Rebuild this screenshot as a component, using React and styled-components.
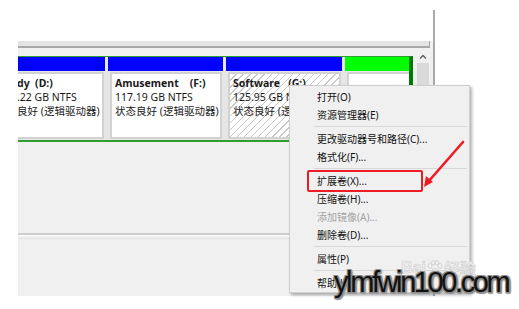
import React from "react";
import styled, { createGlobalStyle } from "styled-components";

const GlobalStyle = createGlobalStyle`
  html, body {
    margin: 0;
    padding: 0;
    background: #ffffff;
    overflow: hidden;
  }
  body {
    font-family: "Noto Sans", "Noto Sans CJK SC", sans-serif;
  }
`;

const partitions = [
  { key: "d", bar: "#0000ff", width: 87, lines: ["dy  (D:)", ".22 GB NTFS", "良好 (逻辑驱动器)"], clip: true },
  { key: "f", bar: "#0000ff", width: 115, lines: ["Amusement    (F:)", "117.19 GB NTFS", "状态良好 (逻辑驱动器)"] },
  { key: "g", bar: "#0000ff", width: 116, lines: ["Software   (G:)", "125.95 GB NTFS", "状态良好 (逻辑驱动器)"], hatched: true },
  { key: "free", bar: "#00ff00", width: 68, lines: [] },
];

const menu = [
  { label: "打开(O)" },
  { label: "资源管理器(E)" },
  { sep: true },
  { label: "更改驱动器号和路径(C)..." },
  { label: "格式化(F)..." },
  { sep: true },
  { label: "扩展卷(X)..." },
  { label: "压缩卷(H)..." },
  { label: "添加镜像(A)...", disabled: true },
  { label: "删除卷(D)..." },
  { sep: true },
  { label: "属性(P)" },
  { sep: true },
  { label: "帮助(H)" },
];

const App = () => {
  return (
    <>
      <GlobalStyle />
      <Screen>
        <Frame>
          <Panel>
            <TopStrip />
            <DiskRow>
              <DiskArea>
                {partitions.map((p) => (
                  <Partition key={p.key} $width={p.width}>
                    <Bar $color={p.bar} />
                    <Cell $hatched={p.hatched} $clip={p.clip}>
                      {p.lines.map((line, i) => (
                        <CellLine key={i} $bold={i === 0}>
                          {line}
                        </CellLine>
                      ))}
                    </Cell>
                  </Partition>
                ))}
              </DiskArea>
              <Scrollbar>
                <ScrollArrow>
                  <svg width="8" height="6" viewBox="0 0 8 6">
                    <path d="M1 4.5 L4 1.5 L7 4.5" fill="none" stroke="#606060" strokeWidth="1.4" />
                  </svg>
                </ScrollArrow>
                <ScrollTrack />
              </Scrollbar>
            </DiskRow>
            <LowerPane />
            <BottomPane />
          </Panel>
        </Frame>

        <Menu>
          {menu.map((item, i) =>
            item.sep ? (
              <Separator key={i} />
            ) : (
              <MenuItem key={i} $disabled={item.disabled}>
                {item.label}
              </MenuItem>
            )
          )}
        </Menu>

        <Highlight />
        <Arrow width="60" height="60" viewBox="0 0 60 60">
          <line x1="52" y1="2" x2="17" y2="42" stroke="#ee1c24" strokeWidth="2.6" strokeLinecap="round" />
          <path d="M13 47 L15 36 L22 42 Z" fill="#ee1c24" />
        </Arrow>

        <BaiduMark>
          Bai
          <svg width="16" height="17" viewBox="0 0 16 17">
            <g fill="none" stroke="#d4d4d4" strokeWidth="1">
              <ellipse cx="3" cy="6" rx="2" ry="2.6" />
              <ellipse cx="6.3" cy="2.8" rx="1.8" ry="2.2" />
              <ellipse cx="10" cy="2.8" rx="1.8" ry="2.2" />
              <ellipse cx="13" cy="6" rx="2" ry="2.6" />
              <path d="M4 14 C4 9 7 8.5 8 8.5 C9 8.5 12 9 12 14 C12 16 4 16 4 14 Z" />
            </g>
          </svg>
          经验
        </BaiduMark>

        <SiteMark>ylmfwin100.com</SiteMark>
      </Screen>
    </>
  );
};

const Screen = styled.div`
  position: relative;
  width: 519px;
  height: 309px;
  overflow: hidden;
  background: #ffffff;
`;

const Frame = styled.div`
  margin: 10px 0 0 18px;
  width: 417px;
  height: 286px;
  padding-top: 31px;
  box-sizing: border-box;
  border-right: 2px solid #a9a9a9;
  display: flex;
  flex-direction: column;
`;

const Panel = styled.div`
  flex: 1;
  background: #f0f0f0;
  display: flex;
  flex-direction: column;
`;

const TopStrip = styled.div`
  height: 5px;
  margin-right: 3px;
  background: #e4e4e4;
  border-bottom: 2px solid #a8a8a8;
  border-right: 1px solid #a8a8a8;
`;

const DiskRow = styled.div`
  display: flex;
  margin-top: 8px;
  height: 86px;
`;

const DiskArea = styled.div`
  display: flex;
  gap: 3px;
  width: 395px;
  box-sizing: border-box;
  border-top: 1px solid #2f9e2f;
  border-bottom: 2px solid #2f9e2f;
  border-right: 4px solid #007a00;
  background: #e6e6e6;
  overflow: hidden;
`;

const Partition = styled.div`
  width: ${(p) => p.$width}px;
  flex-shrink: 0;
  display: flex;
  flex-direction: column;
`;

const Bar = styled.div`
  height: 14px;
  background: ${(p) => p.$color};
`;

const Cell = styled.div`
  flex: 1;
  margin: 1px 1px 1px 2px;
  box-sizing: border-box;
  border: 2px solid #d2d2d2;
  padding: 2px 0 0 ${(p) => (p.$clip ? 0 : 3)}px;
  background: ${(p) =>
    p.$hatched
      ? "repeating-linear-gradient(135deg, #ffffff 0px, #ffffff 4px, #c9c9c9 4px, #c9c9c9 5px)"
      : "#ffffff"};
  overflow: hidden;
  margin-left: ${(p) => (p.$clip ? -3 : 2)}px;
`;

const CellLine = styled.div`
  font-size: 10.5px;
  line-height: 14px;
  height: 14px;
  white-space: pre;
  color: #1a1a1a;
  font-weight: ${(p) => (p.$bold ? 700 : 400)};
`;

const Scrollbar = styled.div`
  width: 12px;
  margin-left: 4px;
  margin-top: -6px;
  display: flex;
  flex-direction: column;
`;

const ScrollArrow = styled.div`
  height: 13px;
  display: flex;
  align-items: center;
  justify-content: center;
`;

const ScrollTrack = styled.div`
  flex: 1;
  background: #dadada;
`;

const LowerPane = styled.div`
  height: 91px;
  border-bottom: 2px solid #cdcdcd;
  box-shadow: 0 1px 0 #ffffff;
`;

const BottomPane = styled.div`
  flex: 1;
  margin-top: 3px;
  border-top: 1px solid #e2e2e2;
`;

const Menu = styled.div`
  position: absolute;
  left: 289px;
  top: 85px;
  width: 181px;
  height: 208px;
  box-sizing: border-box;
  background: #f0f0f0;
  border: 1px solid #cfcfcf;
  box-shadow: 2px 2px 3px rgba(0, 0, 0, 0.3);
  padding-top: 2px;
  display: flex;
  flex-direction: column;
`;

const MenuItem = styled.div`
  height: 18px;
  line-height: 18px;
  padding-left: 27px;
  font-size: 10px;
  white-space: nowrap;
  color: ${(p) => (p.$disabled ? "#a3a3a3" : "#111111")};
`;

const Separator = styled.div`
  height: 1px;
  margin: 2px 2px 3px 24px;
  background: #d8d8d8;
`;

const Highlight = styled.div`
  position: absolute;
  left: 307px;
  top: 170px;
  width: 116px;
  height: 22px;
  box-sizing: border-box;
  border: 2.5px solid #ee1c24;
  border-radius: 2px;
`;

const Arrow = styled.svg`
  position: absolute;
  left: 411px;
  top: 140px;
`;

const BaiduMark = styled.div`
  position: absolute;
  left: 401px;
  top: 256px;
  display: flex;
  align-items: center;
  gap: 1px;
  font-family: "Liberation Sans", "Noto Sans CJK SC", sans-serif;
  font-size: 16px;
  font-weight: 700;
  color: #eeeeee;
  -webkit-text-stroke: 0.6px #cfcfcf;
`;

const SiteMark = styled.div`
  position: absolute;
  left: 334px;
  top: 265px;
  font-family: "Liberation Sans", sans-serif;
  font-size: 29px;
  letter-spacing: -2.4px;
  color: #111111;
  line-height: 34px;
  text-shadow: 1px 1px 0 #8a8a8a, -1px -1px 0 #8a8a8a, 1px -1px 0 #8a8a8a, -1px 1px 0 #8a8a8a,
    2px 2px 1px #9a9a9a, 0 2px 1px #9a9a9a, 2px 0 1px #9a9a9a;
`;

export default App;
